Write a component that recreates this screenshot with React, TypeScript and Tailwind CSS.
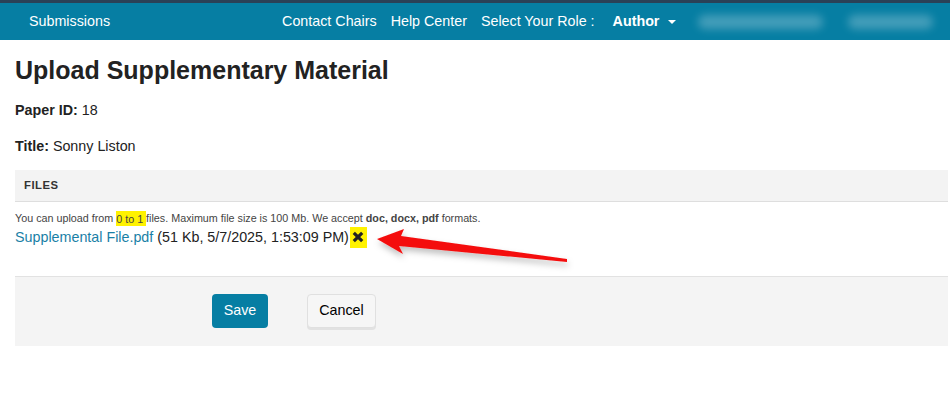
import React from "react";

const font = { fontFamily: '"Liberation Sans", Arial, sans-serif' };

function TopNav() {
  return (
    <div>
      <div className="h-[3px] bg-[#2a4157]" />
      <nav className="flex h-[37px] items-center overflow-hidden whitespace-nowrap bg-[#067ea3] text-[14.3px] text-white">
        <span className="shrink-0 pl-[29px]">Submissions</span>
        <div className="ml-[172px] flex shrink-0 items-center gap-[14px]">
          <span>Contact Chairs</span>
          <span>Help Center</span>
          <span>Select Your Role :</span>
        </div>
        <span className="ml-[18px] flex shrink-0 items-center font-bold">
          Author
          <span className="ml-[9px] mt-[1px] h-0 w-0 border-x-[4px] border-t-[4px] border-x-transparent border-t-white" />
        </span>
        {/* blurred user info */}
        <div className="ml-[22px] flex shrink-0 items-center gap-[25px]">
          <div className="h-[14px] w-[125px] rounded-full bg-white/25 blur-[4px]" />
          <div className="h-[14px] w-[85px] rounded-full bg-white/25 blur-[4px]" />
        </div>
      </nav>
    </div>
  );
}

function Arrow() {
  return (
    <svg
      className="pointer-events-none absolute left-0 top-0"
      width="950"
      height="410"
      viewBox="0 0 950 410"
    >
      <defs>
        <filter id="sh" x="-20%" y="-50%" width="140%" height="200%">
          <feDropShadow dx="1" dy="4" stdDeviation="3" floodColor="#000" floodOpacity="0.25" />
        </filter>
      </defs>
      <polygon
        filter="url(#sh)"
        fill="#f40f0f"
        points="377,239 404,229 401,236 567,259 567,262 399,246 403,254"
      />
    </svg>
  );
}

export default function App() {
  return (
    <div className="relative h-[410px] w-[950px] overflow-hidden bg-white text-[#222]" style={font}>
      <TopNav />
      <div className="pl-[15px]">
        <h1 className="mt-[16px] text-[25px] font-bold leading-[28px] text-[#222]">
          Upload Supplementary Material
        </h1>
        <p className="mt-[16px] text-[14.3px] leading-[20px]">
          <b>Paper ID:</b> 18
        </p>
        <p className="mt-[16px] text-[14.3px] leading-[20px]">
          <b>Title:</b> Sonny Liston
        </p>

        <div className="mt-[14px] w-[933px]">
          <div className="flex h-[32px] items-center border-b border-[#dedede] bg-[#f3f3f3] pl-[9px] text-[11.3px] font-bold tracking-[0.5px] text-[#333]">
            FILES
          </div>
          <div className="pt-[9px]">
            <div className="text-[10.75px] leading-[15px] text-[#444]">
              You can upload from{" "}
              <span className="bg-[#fff200] py-[1.5px]">0 to 1 </span>files. Maximum file size is 100 Mb. We accept{" "}
              <b>doc, docx, pdf</b> formats.
            </div>
            <div className="flex items-center text-[14.3px] leading-[22px]">
              <span className="text-[#1a7fa6]">Supplemental File.pdf</span>
              <span className="ml-[4px] text-[#222]">(51 Kb, 5/7/2025, 1:53:09 PM)</span>
              <span className="ml-[1px] flex h-[21px] w-[17px] items-center justify-center bg-[#fff200]">
                <svg width="12" height="12" viewBox="0 0 12 12">
                  <path d="M1.8 1.8 L10.2 10.2 M10.2 1.8 L1.8 10.2" stroke="#222" strokeWidth="3.2" />
                </svg>
              </span>
            </div>
          </div>
        </div>

        <div className="mt-[28px] flex h-[70px] w-[933px] items-start gap-[39px] border-t border-[#e2e2e2] bg-[#f4f4f4] pl-[197px] pt-[17px]">
          <button
            type="button"
            className="h-[34px] w-[56px] rounded-[4px] bg-[#067ea3] text-[14.3px] text-white"
          >
            Save
          </button>
          <button
            type="button"
            className="h-[34px] w-[69px] rounded-[4px] border border-[#e0e0e0] bg-[#f6f6f6] text-[14.3px] text-black shadow-[0_2px_0_#e2e2e2]"
          >
            Cancel
          </button>
        </div>
      </div>
      <Arrow />
    </div>
  );
}
